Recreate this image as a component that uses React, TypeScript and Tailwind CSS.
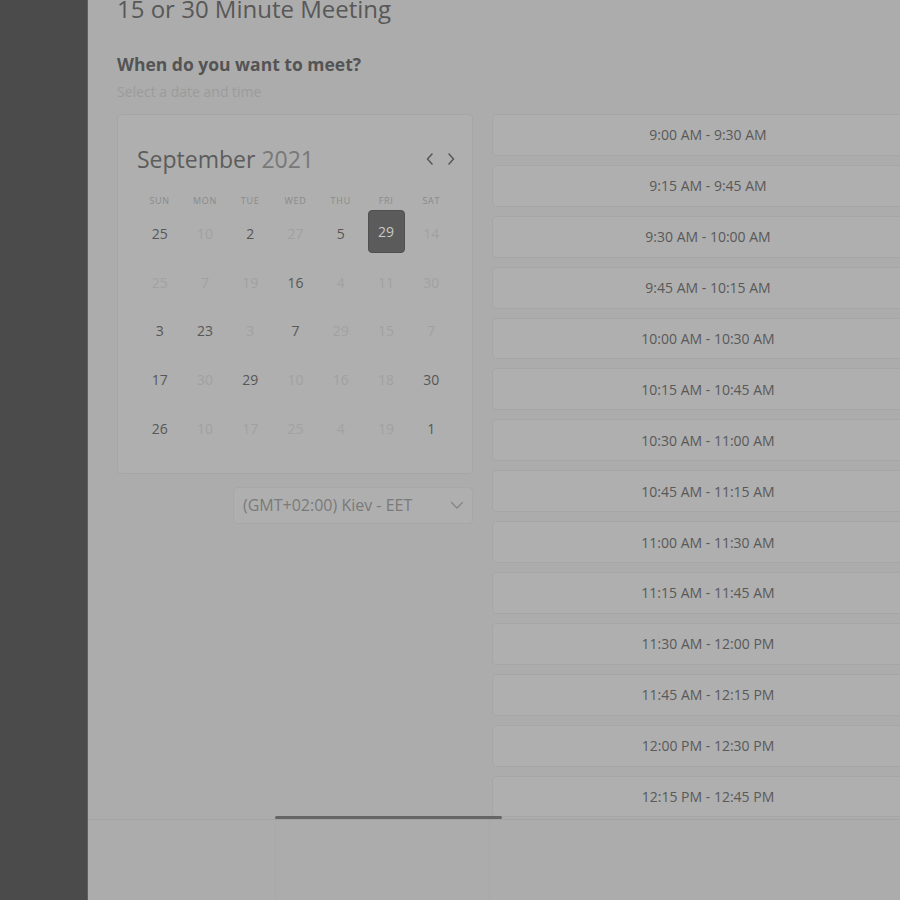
import React from 'react';

type Day = { n: number; on?: boolean; sel?: boolean };

const weeks: Day[][] = [
  [{ n: 25, on: true }, { n: 10 }, { n: 2, on: true }, { n: 27 }, { n: 5, on: true }, { n: 29, sel: true }, { n: 14 }],
  [{ n: 25 }, { n: 7 }, { n: 19 }, { n: 16, on: true }, { n: 4 }, { n: 11 }, { n: 30 }],
  [{ n: 3, on: true }, { n: 23, on: true }, { n: 3 }, { n: 7, on: true }, { n: 29 }, { n: 15 }, { n: 7 }],
  [{ n: 17, on: true }, { n: 30 }, { n: 29, on: true }, { n: 10 }, { n: 16 }, { n: 18 }, { n: 30, on: true }],
  [{ n: 26, on: true }, { n: 10 }, { n: 17 }, { n: 25 }, { n: 4 }, { n: 19 }, { n: 1, on: true }],
];

const weekdays = ['Sun', 'Mon', 'Tue', 'Wed', 'Thu', 'Fri', 'Sat'];

const slots = [
  '9:00 AM - 9:30 AM',
  '9:15 AM - 9:45 AM',
  '9:30 AM - 10:00 AM',
  '9:45 AM - 10:15 AM',
  '10:00 AM - 10:30 AM',
  '10:15 AM - 10:45 AM',
  '10:30 AM - 11:00 AM',
  '10:45 AM - 11:15 AM',
  '11:00 AM - 11:30 AM',
  '11:15 AM - 11:45 AM',
  '11:30 AM - 12:00 PM',
  '11:45 AM - 12:15 PM',
  '12:00 PM - 12:30 PM',
  '12:15 PM - 12:45 PM',
];

function Chevron({ dir }: { dir: 'left' | 'right' }) {
  return (
    <svg width="10" height="14" viewBox="0 0 10 14" fill="none">
      <path
        d={dir === 'left' ? 'M7 2 L2.5 7 L7 12' : 'M3 2 L7.5 7 L3 12'}
        stroke="#5a5a5a"
        strokeWidth="1.6"
        strokeLinecap="round"
        strokeLinejoin="round"
      />
    </svg>
  );
}

function Calendar() {
  return (
    <div className="rounded-[4px] border border-[#a6a6a6] bg-[#afafaf] pt-[28px] pr-[18px] pb-[20px] pl-[19px]">
      <div className="flex items-center justify-between">
        <p className="text-[23px] leading-[32px]">
          <span className="text-[#5c5c5c]">September</span>{' '}
          <span className="text-[#787878]">2021</span>
        </p>
        <div className="-mr-[2px] flex items-center gap-[11px]">
          <Chevron dir="left" />
          <Chevron dir="right" />
        </div>
      </div>

      <div className="mt-[19px] grid grid-cols-7">
        {weekdays.map((d) => (
          <span
            key={d}
            className="text-center text-[9px] uppercase leading-[14px] tracking-[0.08em] text-[#8a8a8a]"
          >
            {d}
          </span>
        ))}
      </div>

      <div className="mt-[1px]">
        {weeks.map((week, i) => (
          <div key={i} className="grid h-[48.75px] grid-cols-7">
            {week.map((day, j) => (
              <div key={j} className="flex items-center justify-center">
                {day.sel ? (
                  <span className="-mt-[3px] flex h-[43px] w-[37px] items-center justify-center rounded-[4px] border border-[#4f4f4f] bg-[#5b5b5b] text-[14px] text-[#c8c8c8]">
                    {day.n}
                  </span>
                ) : (
                  <span
                    className={
                      day.on ? 'text-[14px] text-[#575757]' : 'text-[14px] text-[#a1a1a1]'
                    }
                  >
                    {day.n}
                  </span>
                )}
              </div>
            ))}
          </div>
        ))}
      </div>
    </div>
  );
}

export default function App() {
  return (
    <div
      className="flex h-[900px] w-[900px] overflow-hidden bg-[#acacac]"
      style={{ fontFamily: '"Open Sans", "Noto Sans", sans-serif' }}
    >
      <aside className="w-[88px] shrink-0 border-r border-[#5f5f5f] bg-[#4b4b4b]" />

      <div className="flex min-w-0 flex-1 flex-col">
        <main className="h-[819px] shrink-0 overflow-hidden pl-[29px]">
          <h1 className="-mt-[7px] text-[24px] leading-[32px] text-[#585858]">
            15 or 30 Minute Meeting
          </h1>
          <h2 className="mt-[27px] text-[17.5px] font-bold leading-[24px] text-[#545454]">
            When do you want to meet?
          </h2>
          <p className="mt-[6px] text-[14px] leading-[20px] text-[#9b9b9b]">
            Select a date and time
          </p>

          <div className="mt-[12px] flex gap-[19px]">
            <div className="flex w-[356px] shrink-0 flex-col">
              <Calendar />
              <div className="mt-[13px] flex h-[37px] w-[240px] items-center justify-between self-end rounded-[4px] border border-[#a7a7a7] bg-[#afafaf] pr-[8px] pl-[9px]">
                <span className="text-[16px] text-[#7a7a7a]">(GMT+02:00) Kiev - EET</span>
                <svg width="14" height="9" viewBox="0 0 14 9" fill="none">
                  <path d="M1.5 1.5 L7 7 L12.5 1.5" stroke="#858585" strokeWidth="1.3" strokeLinecap="round" />
                </svg>
              </div>
            </div>

            <div className="flex w-[432px] shrink-0 flex-col gap-[9px]">
              {slots.map((s) => (
                <div
                  key={s}
                  className="flex h-[41.9px] shrink-0 items-center justify-center rounded-[4px] border border-[#a6a6a6] bg-[#afafaf] text-[14px] text-[#595959]"
                >
                  {s}
                </div>
              ))}
            </div>
          </div>
        </main>

        <footer className="relative flex-1 border-t border-[#a3a3a3]">
          <div className="absolute -top-[4px] left-[187px] h-[3px] w-[227px] rounded-full bg-[#656565]" />
          <div className="ml-[187px] h-full w-[215px] border-x border-[#a8a8a8]" />
        </footer>
      </div>
    </div>
  );
}
